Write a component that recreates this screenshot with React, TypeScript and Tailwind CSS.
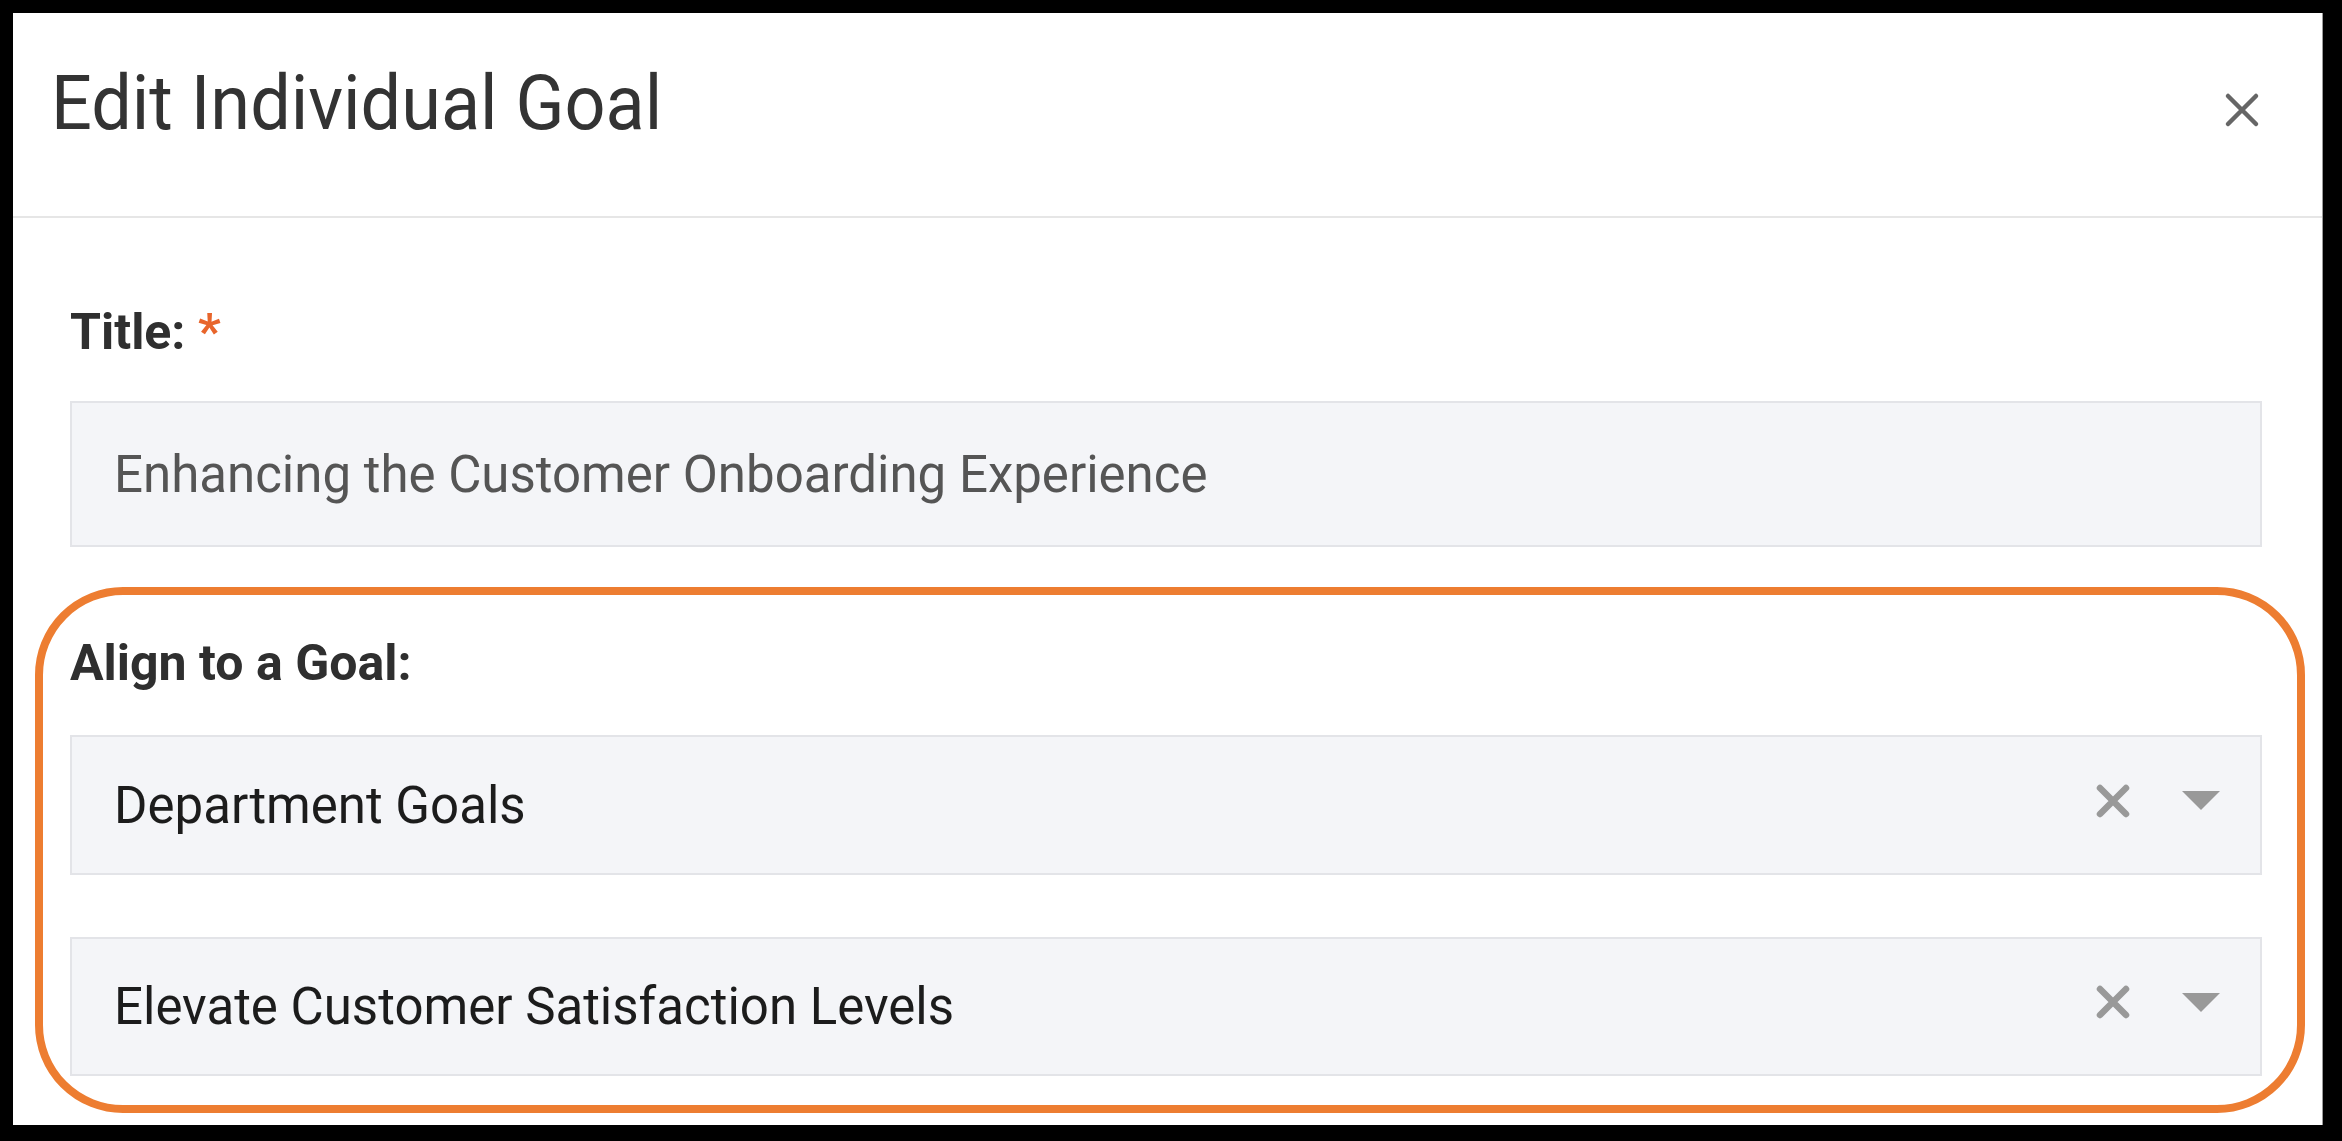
import React from 'react'

function CloseIcon() {
  return (
    <svg width="36" height="36" viewBox="0 0 36 36" className="shrink-0">
      <path d="M4 4 L32 32 M32 4 L4 32" stroke="#666" strokeWidth="4.5" strokeLinecap="round" />
    </svg>
  )
}

function ClearIcon() {
  return (
    <svg width="34" height="34" viewBox="0 0 34 34" className="shrink-0">
      <path d="M4 4 L30 30 M30 4 L4 30" stroke="#999" strokeWidth="6.5" strokeLinecap="round" />
    </svg>
  )
}

function Caret() {
  return (
    <svg width="38" height="19" viewBox="0 0 38 19" className="shrink-0">
      <polygon points="0,0 38,0 19,19" fill="#999" />
    </svg>
  )
}

function GoalSelect({ value, className }: { value: string; className?: string }) {
  return (
    <div
      className={`flex items-center h-[140px] bg-[#f4f5f8] border-2 border-[#e3e4e8] pl-[42px] pr-[40px] ${className ?? ''}`}
    >
      <span className="flex-1 text-[51px] leading-none text-[#1c1c1c]">{value}</span>
      <div className="flex items-center gap-[52px] mb-[9px]">
        <ClearIcon />
        <Caret />
      </div>
    </div>
  )
}

export default function App() {
  return (
    <div className="w-[2342px] h-[1141px] bg-black pt-[13px] pl-[13px] font-[Roboto,sans-serif] overflow-hidden">
      <div className="w-[2310px] h-[1112px] bg-white border-r border-[#9a9a9a] flex flex-col">
        {/* Header */}
        <div className="h-[205px] shrink-0 border-b-2 border-[#e6e6e6] flex items-start justify-between pt-[57px] pl-[38px] pr-[62px]">
          <h1 className="text-[72px] leading-none text-[#333] origin-bottom scale-y-[1.06]">Edit Individual Goal</h1>
          <div className="mt-[22px]">
            <CloseIcon />
          </div>
        </div>

        {/* Body */}
        <div className="pl-[57px] pr-[60px] pt-[84px]">
          <label className="block text-[50px] leading-[60px] font-bold text-[#2f2f2f] mb-[39px]">
            Title: <span className="text-[#e8652b]">*</span>
          </label>
          <div className="flex items-center h-[146px] bg-[#f4f5f8] border-2 border-[#e3e4e8] pl-[42px]">
            <span className="text-[51px] leading-none text-[#555]">
              Enhancing the Customer Onboarding Experience
            </span>
          </div>

          {/* Align section (highlighted) */}
          <div className="mt-[40px] -ml-[35px] -mr-[43px] border-[8px] border-[#ed7d31] rounded-[88px] pl-[27px] pr-[35px] pt-[38px] pb-[29px]">
            <label className="block text-[50px] leading-[60px] font-bold text-[#2f2f2f] mb-[42px]">
              Align to a Goal:
            </label>
            <GoalSelect value="Department Goals" />
            <GoalSelect value="Elevate Customer Satisfaction Levels" className="mt-[62px] !h-[139px]" />
          </div>
        </div>
      </div>
    </div>
  )
}
